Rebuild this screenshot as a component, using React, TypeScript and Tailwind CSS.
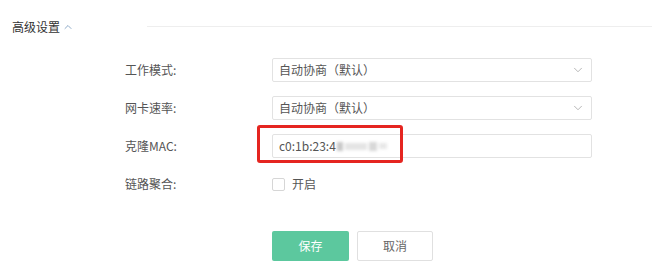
import { ChevronUp, ChevronDown } from "lucide-react";

const font = { fontFamily: "'Noto Sans CJK SC', 'Liberation Sans', sans-serif" };

function Row({ label, children }: { label: string; children: React.ReactNode }) {
  return (
    <div className="flex items-center h-[24px]">
      <div className="w-[272px] shrink-0 pl-[125px] whitespace-nowrap text-[12px] text-[#555]">{label}</div>
      <div className="flex-1">{children}</div>
    </div>
  );
}

function Select({ value }: { value: string }) {
  return (
    <div className="w-[320px] h-[24px] border border-[#e2e2e2] rounded-[2px] flex items-center justify-between pl-[6px] pr-[6px] text-[12px] text-[#555]">
      <span>{value}</span>
      <ChevronDown size={14} strokeWidth={1.2} className="text-[#999]" />
    </div>
  );
}

export default function App() {
  return (
    <div className="w-[652px] h-[272px] bg-white overflow-hidden" style={font}>
      <div className="flex items-center h-[20px] mt-[17px] pl-[12px]">
        <span className="text-[12px] text-[#333]">高级设置</span>
        <ChevronUp size={12} strokeWidth={1.5} className="ml-[2px] text-[#6a8fb5]" />
        <div className="flex-1 ml-[73px] h-px bg-[#eeeeee] -mt-[2px]" />
      </div>

      <div className="flex flex-col gap-[14px] mt-[21px]">
        <Row label="工作模式:">
          <Select value="自动协商（默认）" />
        </Row>
        <Row label="网卡速率:">
          <Select value="自动协商（默认）" />
        </Row>
        <Row label="克隆MAC:">
          <div className="relative w-[320px] h-[24px] border border-[#e2e2e2] rounded-[2px] flex items-center pl-[6px] text-[12px] text-[#555]">
            <span>c0:1b:23:4</span>
            <div className="flex items-center gap-[2px] ml-[1px] blur-[1.5px]">
              <div className="w-[6px] h-[9px] bg-[#c8c8c8]" />
              <div className="w-[22px] h-[7px] bg-[#e4e4e4]" />
              <div className="w-[8px] h-[9px] bg-[#d8d8d8]" />
              <div className="w-[8px] h-[6px] bg-[#e8e8e8]" />
            </div>
            <div className="absolute left-[-16px] top-[-10px] w-[146px] h-[38px] border-[3px] border-[#e52520] rounded-[3px]" />
          </div>
        </Row>
        <Row label="链路聚合:">
          <label className="flex items-center gap-[7px] text-[12px] text-[#555]">
            <span className="w-[13px] h-[13px] border border-[#d6d6d6] rounded-[2px] bg-white" />
            开启
          </label>
        </Row>
      </div>

      <div className="flex gap-[8px] pl-[272px] mt-[35px]">
        <button className="w-[77px] h-[30px] rounded-[2px] bg-[#5cc89e] text-white text-[12px]">保存</button>
        <button className="w-[76px] h-[30px] rounded-[2px] border border-[#e0e0e0] bg-white text-[#666] text-[12px]">取消</button>
      </div>
    </div>
  );
}
